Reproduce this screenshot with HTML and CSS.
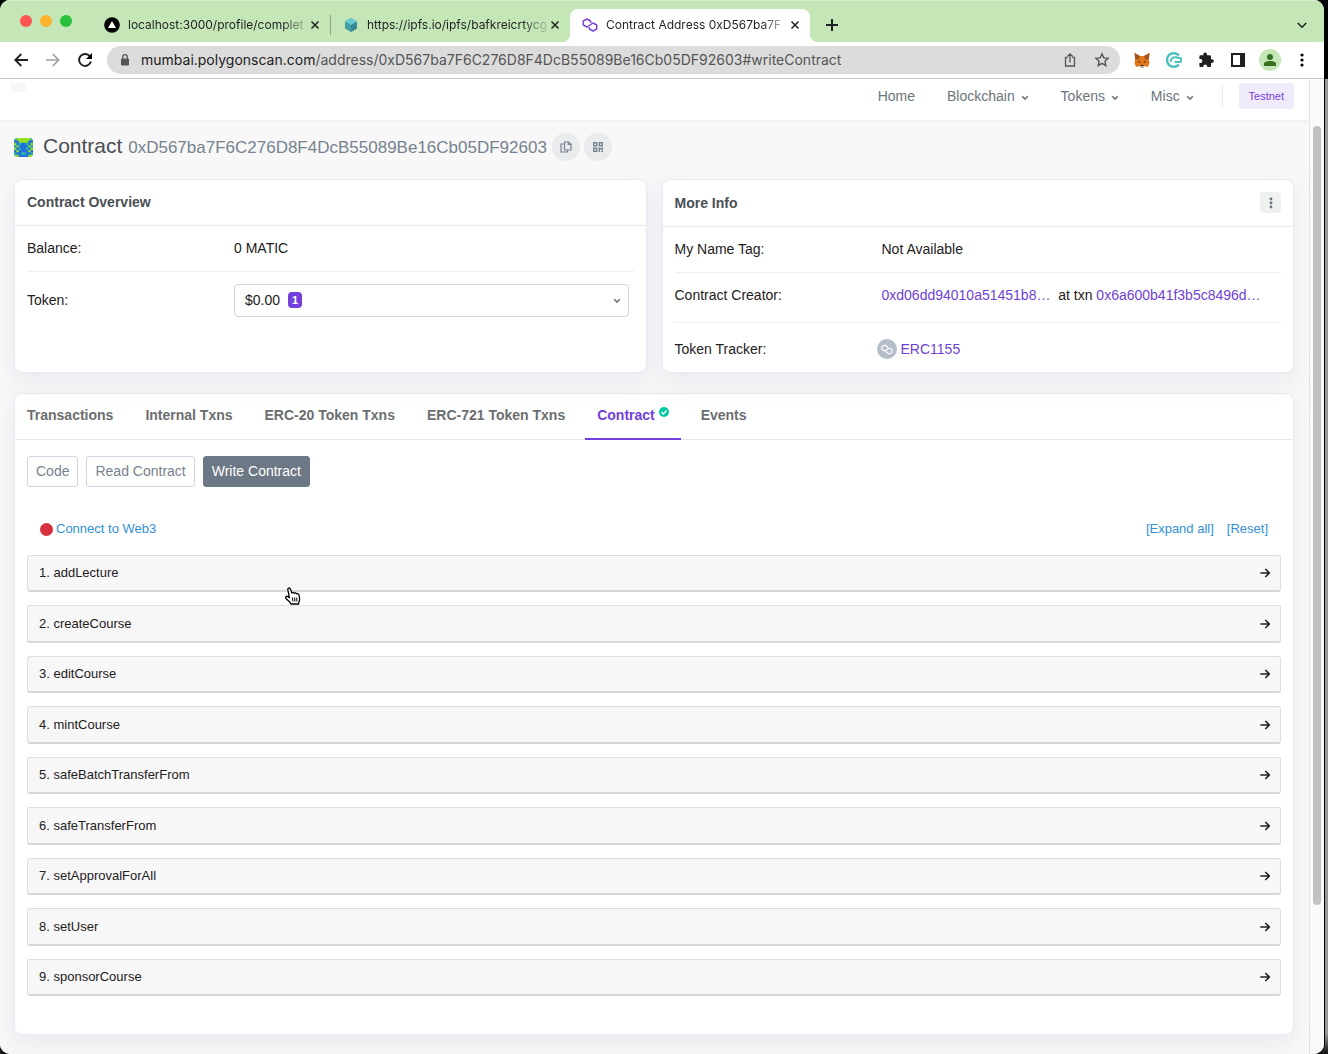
FILE: index.html
```html
<!DOCTYPE html>
<html lang="en">
<head>
    <meta charset="UTF-8">
    <meta name="viewport" content="width=device-width, initial-scale=1.0">
    <title>Contract Address 0xD567ba7F6C276D8F4DcB55089Be16Cb05DF92603</title>
    <link rel="stylesheet" href="styles.css">
</head>
<body>
    <svg class="sprite" aria-hidden="true">
        <symbol id="i-close" viewBox="0 0 10 10"><path d="M1.5 1.5l7 7M8.5 1.5l-7 7" fill="none" stroke="currentColor" stroke-width="1.5"/></symbol>
        <symbol id="i-chevron" viewBox="0 0 8 6"><path d="M1.2 1.2L4 4l2.800-2.800" fill="none" stroke="currentColor" stroke-width="1.6"/></symbol>
        <symbol id="i-arrow" viewBox="0 0 10 10"><path d="M.3 5h9M5.3 1l4 4-4 4" fill="none" stroke="currentColor" stroke-width="1.6"/></symbol>
        <symbol id="i-polygon" viewBox="0 0 16 14"><path d="M8.600 5V3L5 1 1.300 3v4L5 9l6-4 3.700 2v4L11 13l-3.600-2V9" fill="none" stroke="currentColor" stroke-width="1.5" stroke-linejoin="round"/></symbol>
    </svg>

    <div class="window">
        <div class="tab-strip">
            <div class="lights">
                <span class="light red"></span>
                <span class="light yellow"></span>
                <span class="light green"></span>
            </div>
            <div class="tab divided">
                <svg class="favicon" viewBox="0 0 16 16"><circle cx="8" cy="8" r="7.8"/><path d="M8 4l4 7H4z" fill="#fff"/></svg>
                <span class="tab-title">localhost:3000/profile/complet</span>
                <button class="icon-btn" aria-label="Close tab"><svg width="10" height="10"><use href="#i-close"/></svg></button>
            </div>
            <div class="tab">
                <svg class="favicon" viewBox="0 0 16 16"><path d="M8 1l6 3.5v7L8 15l-6-3.5v-7z" fill="#469ea2"/><path d="M8 1l6 3.5L8 8 2 4.5z" fill="#6acad1"/><path d="M8 8l6-3.5v7L8 15z" fill="#388a97"/></svg>
                <span class="tab-title">https://ipfs.io/ipfs/bafkreicrtycg</span>
                <button class="icon-btn" aria-label="Close tab"><svg width="10" height="10"><use href="#i-close"/></svg></button>
            </div>
            <div class="tab active">
                <svg class="favicon purple"><use href="#i-polygon"/></svg>
                <span class="tab-title">Contract Address 0xD567ba7F</span>
                <button class="icon-btn" aria-label="Close tab"><svg width="10" height="10"><use href="#i-close"/></svg></button>
            </div>
            <button class="icon-btn new-tab" aria-label="New tab"><svg width="12" height="12" viewBox="0 0 12 12"><path d="M6 0v12M0 6h12" stroke="currentColor" stroke-width="2"/></svg></button>
            <button class="icon-btn tab-search" aria-label="Search tabs"><svg width="10" height="7" viewBox="0 0 10 7"><path d="M.8 1L5 5.2 9.200 1" fill="none" stroke="currentColor" stroke-width="1.6"/></svg></button>
        </div>

        <div class="toolbar">
            <div class="history">
                <button class="icon-btn" aria-label="Back"><svg width="14" height="14" viewBox="0 0 14 14"><path d="M14 7H1.5M7.3 1l-6 6 6 6" fill="none" stroke="currentColor" stroke-width="1.8"/></svg></button>
                <button class="icon-btn faded" aria-label="Forward"><svg width="14" height="14" viewBox="0 0 14 14"><path d="M0 7h12.5M6.7 1l6 6-6 6" fill="none" stroke="currentColor" stroke-width="1.6"/></svg></button>
                <button class="icon-btn" aria-label="Reload"><svg width="14" height="14" viewBox="0 0 14 14"><path d="M11.8 3.2A6 6 0 1 0 12.9 8.5" fill="none" stroke="currentColor" stroke-width="1.9"/><path d="M14 0v6H8z"/></svg></button>
            </div>
            <div class="address-bar">
                <svg class="lock" width="10" height="12" viewBox="0 0 10 12"><rect x="1" y="4.5" width="8" height="7" rx="1" fill="currentColor"/><path d="M2.7 5V3a2.3 2.3 0 0 1 4.6 0v2" fill="none" stroke="currentColor" stroke-width="1.3"/></svg>
                <span class="url"><b>mumbai.polygonscan.com</b>/address/0xD567ba7F6C276D8F4DcB55089Be16Cb05DF92603#writeContract</span>
                <button class="icon-btn" aria-label="Share"><svg width="14" height="16" viewBox="0 0 14 16"><path d="M4.5 5.5h-2V14h9V5.500h-2M7 10.500V2M4.300 4.500L7 1.800l2.700 2.700" fill="none" stroke="currentColor" stroke-width="1.3"/></svg></button>
                <button class="icon-btn" aria-label="Bookmark"><svg width="16" height="16" viewBox="0 0 16 16"><path d="M8 1.9l1.8 4 4.3.4-3.2 2.900.9 4.300L8 11.300l-3.800 2.200.9-4.300-3.200-2.900 4.300-.4z" fill="none" stroke="currentColor" stroke-width="1.4"/></svg></button>
            </div>
            <div class="extensions">
                <button class="icon-btn" aria-label="MetaMask"><svg width="16" height="16" viewBox="0 0 16 16"><path d="M.5 1L6 4h4l5.500-3-.7 6 .7 4-1.500 4-3.500-1L9.500 15.500h-3L5.500 14 2 15 .5 11l.7-4z" fill="#e2761b"/><path d="M.5 1L6 4 4.500 8 1.200 7zM15.500 1L10 4l1.500 4 3.300-1z" fill="#a65322"/><path d="M3.500 9l3 .7-.8 1.300zM12.500 9l-3 .7.800 1.300z" fill="#3b2a24"/><path d="M5.500 14l1-1h3l1 1-1 1.500h-3z" fill="#c7b5a5"/><path d="M6.500 13h3v1h-3z" fill="#2b2220"/></svg></button>
                <button class="icon-btn" aria-label="Coin wallet"><svg width="16" height="16" viewBox="0 0 16 16"><path d="M13 3.600A6.800 6.800 0 1 0 12.800 12.600" fill="none" stroke="#4dbfc0" stroke-width="2.400"/><path d="M5 9.800C4.500 7 7 4.800 10 5.200l5.500 1.300L14.500 10H8.500" fill="none" stroke="#4dbfc0" stroke-width="2"/></svg></button>
                <button class="icon-btn" aria-label="Extensions"><svg width="16" height="16" viewBox="0 0 16 16"><path d="M14 7.300h-1V4.500a1.200 1.200 0 0 0-1.200-1.200H8.900v-1a1.800 1.800 0 0 0-3.600 0v1H2.600A1.200 1.200 0 0 0 1.400 4.500v2.600h1a2 2 0 0 1 0 4h-1v2.700A1.200 1.200 0 0 0 2.600 15h2.700v-1a2 2 0 0 1 3.900 0v1h2.600a1.200 1.200 0 0 0 1.200-1.200v-2.900h1a1.800 1.800 0 0 0 0-3.600z" fill="currentColor"/></svg></button>
                <button class="icon-btn" aria-label="Side panel"><svg width="14" height="14" viewBox="0 0 14 14"><path d="M1 1h12v12H1z" fill="#fff" stroke="currentColor" stroke-width="2"/><path d="M9 1h4v12H9z" fill="currentColor"/></svg></button>
                <button class="icon-btn profile" aria-label="Profile"><svg width="12" height="12" viewBox="0 0 12 12"><circle cx="6" cy="3" r="3"/><path d="M0 12V9.800C0 7.800 3.500 7 6 7s6 .8 6 2.800V12z"/></svg></button>
                <button class="icon-btn" aria-label="Browser menu"><svg width="4" height="14" viewBox="0 0 4 14"><circle cx="2" cy="2" r="1.600"/><circle cx="2" cy="7" r="1.600"/><circle cx="2" cy="12" r="1.600"/></svg></button>
            </div>
        </div>

        <div class="viewport">
            <div class="page">
                <header class="navbar">
                    <span class="logo-stub"></span>
                    <nav>
                        <a href="#">Home</a>
                        <a href="#">Blockchain <svg width="8" height="6"><use href="#i-chevron"/></svg></a>
                        <a href="#">Tokens <svg width="8" height="6"><use href="#i-chevron"/></svg></a>
                        <a href="#">Misc <svg width="8" height="6"><use href="#i-chevron"/></svg></a>
                    </nav>
                    <span class="testnet">Testnet</span>
                </header>

                <main>
                    <div class="title-row">
                        <svg class="identicon" viewBox="0 0 8 8">
                            <rect width="8" height="8" fill="#1f6fe0"/>
                            <path d="M1 0h6v1H1zM2 1h4v1H2zM0 2h1v1H0zM7 2h1v1H7zM1 3h1v1H1zM6 3h1v1H6zM0 4h1v1H0zM7 4h1v1H7zM1 5h1v1H1zM6 5h1v1H6zM0 7h2v1H0zM6 7h2v1H6z" fill="#97e01c"/>
                            <path d="M0 0h1v1H0zM7 0h1v1H7zM2 2h1v1H2zM5 2h1v1H5zM0 3h1v1H0zM7 3h1v1H7zM2 4h1v1H2zM5 4h1v1H5zM3 6h2v1H3zM0 6h1v1H0zM7 6h1v1H7z" fill="#2fb6a0"/>
                        </svg>
                        <h1>Contract <small>0xD567ba7F6C276D8F4DcB55089Be16Cb05DF92603</small></h1>
                        <button class="round-btn" aria-label="Copy address"><svg width="12" height="12" viewBox="0 0 12 12"><path d="M4.500 1h4L11 3.300V9H4.500zM8.300 1v2.500H11M4.500 3H1v8h6.500V9" fill="none" stroke="currentColor" stroke-width="1.2"/></svg></button>
                        <button class="round-btn" aria-label="View QR code"><svg width="12" height="12" viewBox="0 0 12 12"><path d="M1.700 1.700h3v3h-3zM7.300 1.700h3v3h-3zM1.700 7.300h3v3h-3z" fill="none" stroke="currentColor" stroke-width="1.400"/><path d="M6.600 6.600h2v1h1v-1H11V9H9.500v-.6H8V11H6.600zM9 9.800h2V11H9z" fill="currentColor"/></svg></button>
                    </div>

                    <div class="cards">
                        <section class="card">
                            <div class="card-header"><h2>Contract Overview</h2></div>
                            <div class="card-body">
                                <div class="row">
                                    <div class="label">Balance:</div>
                                    <div>0 MATIC</div>
                                </div>
                                <div class="row token-row">
                                    <label class="label" for="token">Token:</label>
                                    <div class="token-select">
                                        <select id="token"><option>$0.00</option></select>
                                        <span class="count">1</span>
                                        <svg class="caret" width="8" height="6"><use href="#i-chevron"/></svg>
                                    </div>
                                </div>
                            </div>
                        </section>

                        <section class="card">
                            <div class="card-header">
                                <h2>More Info</h2>
                                <button class="more-btn" aria-label="More options"><svg width="4" height="12" viewBox="0 0 4 12"><circle cx="2" cy="2" r="1.400"/><circle cx="2" cy="6" r="1.400"/><circle cx="2" cy="10" r="1.400"/></svg></button>
                            </div>
                            <div class="card-body">
                                <div class="row">
                                    <div class="label">My Name Tag:</div>
                                    <div>Not Available</div>
                                </div>
                                <div class="row creator-row">
                                    <div class="label">Contract Creator:</div>
                                    <div><a href="#">0xd06dd94010a51451b8…</a>&nbsp; at txn <a href="#">0x6a600b41f3b5c8496d…</a></div>
                                </div>
                                <div class="row tracker-row">
                                    <div class="label">Token Tracker:</div>
                                    <a class="tracker" href="#"><span class="token-icon"><svg width="12" height="11"><use href="#i-polygon"/></svg></span>ERC1155</a>
                                </div>
                            </div>
                        </section>
                    </div>

                    <section class="card panel">
                        <nav class="tabs">
                            <a href="#">Transactions</a>
                            <a href="#">Internal Txns</a>
                            <a href="#">ERC-20 Token Txns</a>
                            <a href="#">ERC-721 Token Txns</a>
                            <a href="#" class="current">Contract <svg class="verified" width="10" height="10" viewBox="0 0 10 10"><circle cx="5" cy="5" r="5" fill="#00c9a7"/><path d="M2.500 5.200l1.800 1.700 3.300-3.400" fill="none" stroke="#fff" stroke-width="1.400"/></svg></a>
                            <a href="#">Events</a>
                        </nav>
                        <div class="panel-body">
                            <div class="modes">
                                <button class="mode">Code</button>
                                <button class="mode">Read Contract</button>
                                <button class="mode selected">Write Contract</button>
                            </div>
                            <div class="connect-row">
                                <a class="connect" href="#"><span class="dot"></span>Connect to Web3</a>
                                <a href="#">[Expand all]</a>
                                <a href="#">[Reset]</a>
                            </div>
                            <div class="methods">
                                <button class="method">1. addLecture <svg width="10" height="10"><use href="#i-arrow"/></svg></button>
                                <button class="method">2. createCourse <svg width="10" height="10"><use href="#i-arrow"/></svg></button>
                                <button class="method">3. editCourse <svg width="10" height="10"><use href="#i-arrow"/></svg></button>
                                <button class="method">4. mintCourse <svg width="10" height="10"><use href="#i-arrow"/></svg></button>
                                <button class="method">5. safeBatchTransferFrom <svg width="10" height="10"><use href="#i-arrow"/></svg></button>
                                <button class="method">6. safeTransferFrom <svg width="10" height="10"><use href="#i-arrow"/></svg></button>
                                <button class="method">7. setApprovalForAll <svg width="10" height="10"><use href="#i-arrow"/></svg></button>
                                <button class="method">8. setUser <svg width="10" height="10"><use href="#i-arrow"/></svg></button>
                                <button class="method">9. sponsorCourse <svg width="10" height="10"><use href="#i-arrow"/></svg></button>
                            </div>
                        </div>
                    </section>
                </main>
            </div>
            <div class="scrollbar"><div class="thumb"></div></div>
        </div>
    </div>

    <svg class="pointer" width="17" height="19" viewBox="0 0 17 19"><path d="M3.800 2.600C3.500.8 5.800.4 6.400 2.100L7.800 6c.5-.9 2-.8 2.400.3.600-.8 2-.5 2.300.6.900-.6 2.200 0 2.500 1.200l.6 3.400c.2 2-.8 3.200-1 5.500H7c-.8-2-3-3.300-5-5.500-1.200-1.400.6-3 2.200-1.700l1.200.9z" fill="#fff" stroke="#000" stroke-width="1.300" stroke-linejoin="round"/><path d="M8.500 10.500l.4 4M10.700 10.500l.2 4M12.800 10.500v4" stroke="#000"/></svg>
</body>
</html>
```
FILE: styles.css
```css
* { margin: 0; padding: 0; box-sizing: border-box; }
body {
    height: 100vh;
    padding-right: 4px;
    background: linear-gradient(#000 0 79px, #999 79px 98%, #111);
    font-family: "Liberation Sans", Arial, sans-serif;
    font-size: 14px;
    line-height: 20px;
    color: #1e2022;
    overflow: hidden;
}
a { color: #6f3fd6; text-decoration: none; }
button, select { font: inherit; color: inherit; border: none; background: none; cursor: pointer; }
svg { flex: none; }
.sprite { position: absolute; width: 0; height: 0; }

/* browser window */
.window {
    height: 100vh;
    display: flex;
    flex-direction: column;
    background: #fff;
    border-radius: 10px;
    overflow: hidden;
    box-shadow: 0 0 0 1px #000;
}
.icon-btn { display: flex; align-items: center; justify-content: center; flex: none; }
.tab-strip {
    display: flex;
    align-items: center;
    height: 42px;
    flex: none;
    background: #c5e7b8;
    border-top: 1px solid #d9f0d0;
    padding-right: 17px;
    font: 12px/16px Inter, sans-serif;
}
.lights { display: flex; gap: 8px; width: 92px; padding: 0 0 2px 20px; margin-bottom: 0; align-self: flex-start; margin-top: 14px; }
.light { width: 12px; height: 12px; border-radius: 50%; }
.red { background: #ff5550; }
.yellow { background: #fdb42c; }
.green { background: #27c13b; }
.tab {
    position: relative;
    display: flex;
    align-items: center;
    gap: 8px;
    flex: 0 1 239px;
    min-width: 0;
    height: 33px;
    margin-top: 8px;
    padding: 0 10px 2px 12px;
}
.tab.divided { border-right: 1px solid #8aab7e; height: 20px; margin-top: 7px; padding-bottom: 0; }
.tab.active {
    background: #fff;
    border-radius: 8px 8px 0 0;
    flex-basis: 240px;
}
.tab.active::before, .tab.active::after {
    content: "";
    position: absolute;
    bottom: 0;
    width: 8px;
    height: 8px;
}
.tab.active::before { left: -8px; background: radial-gradient(circle at 0 0, transparent 8px, #fff 8px); }
.tab.active::after { right: -8px; background: radial-gradient(circle at 100% 0, transparent 8px, #fff 8px); }
.favicon { width: 16px; height: 16px; }
.favicon.purple { color: #7b45d6; }
.tab-title {
    flex: 1;
    min-width: 0;
    overflow: hidden;
    white-space: nowrap;
    margin-right: -5px;
    mask-image: linear-gradient(to right, #000 86%, rgba(0,0,0,0.15));
}
.new-tab { margin-left: 16px; margin-top: 7px; }
.tab-search { margin-left: auto; margin-top: 7px; }

.toolbar {
    display: flex;
    align-items: center;
    height: 37px;
    flex: none;
    border-bottom: 1px solid #c6c6c6;
    padding: 0 14px;
    color: #1f1f1f;
}
.history { display: flex; gap: 18px; margin-right: 15px; }
.faded { color: #9e9e9e; }
.address-bar {
    flex: 1;
    min-width: 0;
    display: flex;
    align-items: center;
    gap: 17px;
    height: 28px;
    padding: 0 10px 0 13px;
    border-radius: 14px;
    background: #dcdcdc;
    color: #555;
}
.lock { margin-right: -6px; }
.url { flex: 1; min-width: 0; overflow: hidden; white-space: nowrap; font: 14px/20px Inter, sans-serif; }
.url b { font-weight: 400; color: #1c1c1c; }
.extensions { display: flex; align-items: center; gap: 16px; padding-left: 14px; }
.extensions .icon-btn { width: 16px; }
.extensions .profile { width: 22px; height: 22px; margin: 0 -3px; border-radius: 50%; background: #c5e7b8; fill: #37701f; }

.viewport { flex: 1; min-height: 0; display: flex; }
.page { flex: 1; min-width: 0; background: #f8f8f9; overflow: hidden; }
.scrollbar { width: 15px; background: #fafafa; border-left: 1px solid #e3e3e3; padding: 47px 3px 0; }
.thumb { width: 8px; height: 84%; max-height: 779px; border-radius: 4px; background: #c1c1c1; }

/* explorer header */
.navbar {
    display: flex;
    align-items: center;
    height: 41px;
    padding: 0 15px 8px 10px;
    background: #fff;
    box-shadow: 0 1px 4px rgba(0,0,0,0.05);
}
.logo-stub { width: 16px; height: 9px; margin-bottom: 16px; border-radius: 4px; background: #f7f7f7; }
.navbar nav { display: flex; gap: 32px; margin-left: auto; padding-right: 28px; border-right: 1px solid #e7eaf3; }
.navbar nav a { color: #6c757e; }
.navbar nav svg { margin-left: 2px; }
.testnet {
    margin-left: 16px;
    padding: 3px 10px;
    border-radius: 4px;
    background: #f0ebfa;
    color: #7a3fe0;
    font-size: 11px;
}

main { padding: 13px 15px 24px 14px; }
.title-row { display: flex; align-items: center; height: 28px; margin-bottom: 18px; }
.identicon { width: 19px; height: 19px; border-radius: 4px; margin-right: 10px; }
h1 { font-size: 21px; line-height: 28px; font-weight: 400; color: #4a4f55; margin-right: 5px; white-space: nowrap; }
h1 small { font-size: 17px; color: #77838f; }
.round-btn {
    display: flex;
    align-items: center;
    justify-content: center;
    width: 28px;
    height: 28px;
    margin-right: 4px;
    border-radius: 50%;
    background: #e9ebed;
    color: #77838f;
}

.cards { display: grid; grid-template-columns: 1fr 1fr; gap: 15px; margin-bottom: 20px; }
.card {
    background: #fff;
    border: 1px solid #e7eaf3;
    border-radius: 8px;
    box-shadow: 0 8px 20px rgba(189,197,209,0.25);
}
.card-header {
    display: flex;
    align-items: center;
    justify-content: space-between;
    padding: 12px 12px 13px;
    border-bottom: 1px solid #e7eaf3;
}
h2 { font-size: 14px; font-weight: 700; color: #4a4f55; }
.more-btn {
    display: flex;
    align-items: center;
    justify-content: center;
    width: 21px;
    height: 21px;
    border-radius: 4px;
    background: #eff1f1;
    fill: #6c757e;
}
.card-body { padding: 0 12px; }
.row {
    display: grid;
    grid-template-columns: 207px 1fr;
    align-items: center;
    height: 46px;
    padding-bottom: 2px;
    border-bottom: 1px solid #edeff5;
}
.row:last-child { border-bottom: none; }
.token-row { height: 58px; }
.creator-row { height: 50px; padding-bottom: 6px; }
.tracker-row { height: 49px; padding: 3px 0 0; }
.token-select { position: relative; margin-right: 5px; }
.token-select select {
    appearance: none;
    display: block;
    width: 100%;
    height: 33px;
    padding: 0 10px;
    border: 1px solid #cfd4e2;
    border-radius: 4px;
    background: #fff;
}
.count {
    position: absolute;
    left: 54px;
    top: 8px;
    width: 14px;
    border-radius: 4px;
    background: #7340db;
    color: #fff;
    font: 700 11px/16px "Liberation Sans", Arial, sans-serif;
    text-align: center;
    pointer-events: none;
}
.caret { position: absolute; right: 8px; top: 14px; color: #6c757e; pointer-events: none; }
.tracker { display: flex; align-items: center; gap: 4px; margin-left: -5px; }
.token-icon {
    display: flex;
    align-items: center;
    justify-content: center;
    width: 20px;
    height: 20px;
    border-radius: 50%;
    background: #b5bdca;
    color: #fff;
}

/* contract panel */
.tabs { display: flex; gap: 8px; border-bottom: 1px solid #e7e7ea; }
.tabs a {
    padding: 11px 12px 13px;
    margin-bottom: -1px;
    border-bottom: 2px solid transparent;
    font-weight: 700;
    color: #6b6e71;
    white-space: nowrap;
}
.tabs a.current { color: #7340db; border-color: #7340db; }
.verified { vertical-align: 3px; }
.panel-body { padding: 16px 12px 38px; }
.modes { display: flex; gap: 8px; margin-bottom: 32px; }
.mode { height: 31px; padding: 0 8px 2px; border: 1px solid #cfd4e2; border-radius: 3px; color: #77838f; }
.mode.selected { background: #6c7885; border-color: #6c7885; color: #fff; }
.connect-row { display: flex; gap: 13px; padding: 0 13px; margin-bottom: 16px; font-size: 13px; }
.connect-row a { color: #3190d6; }
.connect { display: flex; align-items: center; gap: 3px; margin-right: auto; }
.dot { width: 13px; height: 13px; border-radius: 50%; background: #d9303e; }
.method {
    display: flex;
    align-items: center;
    justify-content: space-between;
    width: 100%;
    height: 37px;
    margin-bottom: 13px;
    padding: 0 10px 0 11px;
    border: 1px solid #dedede;
    border-bottom: 2px solid #d6d7d8;
    border-radius: 3px;
    background: #f7f7f7;
    font-size: 13px;
}
.method:nth-child(even) { height: 38px; }
.method:last-child { margin-bottom: 0; }

.pointer { position: fixed; left: 284px; top: 587px; pointer-events: none; }
```
